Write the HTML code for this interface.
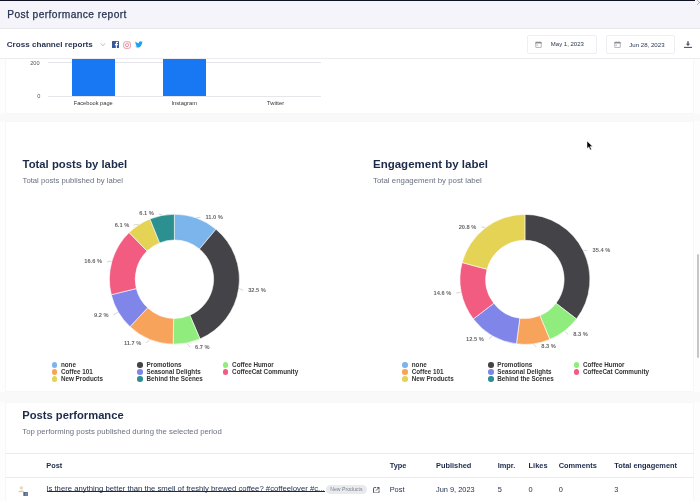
<!DOCTYPE html>
<html><head><meta charset="utf-8"><style>
html,body{margin:0;padding:0;}
.wrap{position:absolute;left:0;top:0;width:700px;height:501px;will-change:transform;}
body{width:700px;height:501px;overflow:hidden;position:relative;background:#fff;font-family:"Liberation Sans",sans-serif;}
.t{position:absolute;white-space:nowrap;}
.r{position:absolute;}
</style></head><body><div class="wrap">
<div class="r" style="left:0px;top:0px;width:700px;height:501px;background:#fdfdfd;"></div>
<div class="r" style="left:0px;top:114px;width:700px;height:7px;background:#f9f9fa;"></div>
<div class="r" style="left:0px;top:392px;width:700px;height:10px;background:#f9f9fa;"></div>
<div class="r" style="left:5px;top:40px;width:689px;height:74px;background:#fff;border:1px solid #f7f7f8;box-sizing:border-box;"></div>
<div class="r" style="left:5px;top:121px;width:689px;height:271px;background:#fff;border:1px solid #f7f7f8;box-sizing:border-box;"></div>
<div class="r" style="left:5px;top:402px;width:689px;height:118px;background:#fff;border:1px solid #f7f7f8;box-sizing:border-box;"></div>
<div class="r" style="left:48px;top:62px;width:273px;height:1px;background:#e6e6ea;"></div>
<div class="r" style="left:48px;top:96px;width:273px;height:1px;background:#e6e6ea;"></div>
<div class="r" style="left:72px;top:50px;width:43px;height:46px;background:#1877f2;"></div>
<div class="r" style="left:163px;top:50px;width:43px;height:46px;background:#1877f2;"></div>
<div class="t" style="left:30.20px;top:60.56px;font-size:5.6px;line-height:5.6px;color:#555;font-weight:normal;letter-spacing:0px;">200</div>
<div class="t" style="left:37.20px;top:94.16px;font-size:5.6px;line-height:5.6px;color:#555;font-weight:normal;letter-spacing:0px;">0</div>
<div class="t" style="left:73.70px;top:101.00px;font-size:5.67px;line-height:5.67px;color:#333;font-weight:normal;letter-spacing:0px;">Facebook page</div>
<div class="t" style="left:171.40px;top:100.92px;font-size:5.76px;line-height:5.76px;color:#333;font-weight:normal;letter-spacing:0px;">Instagram</div>
<div class="t" style="left:267.00px;top:100.89px;font-size:5.8px;line-height:5.8px;color:#333;font-weight:normal;letter-spacing:0px;">Twitter</div>
<div class="r" style="left:0px;top:0px;width:700px;height:29px;background:#f4f4fa;border-bottom:1px solid #e8e8ec;box-sizing:border-box;"></div>
<div class="r" style="left:0px;top:0px;width:695px;height:1.3px;background:#0f1220;"></div>
<div class="r" style="left:0px;top:29px;width:700px;height:30px;background:#fff;border-bottom:1px solid #ececf0;box-sizing:border-box;"></div>
<div class="t" style="left:7.30px;top:10.27px;font-size:10.2px;line-height:10.2px;color:#26314f;font-weight:normal;letter-spacing:0.42px;-webkit-text-stroke:0.25px #26314f;">Post performance report</div>
<div class="t" style="left:6.70px;top:40.83px;font-size:8.12px;line-height:8.12px;color:#2a3450;font-weight:bold;letter-spacing:0px;">Cross channel reports</div>
<svg class="r" style="left:99px;top:41px" width="8" height="7" viewBox="0 0 8 7"><path d="M1.7 2.3 L3.9 4.9 L6.1 2.3" fill="none" stroke="#a4a9b4" stroke-width="0.7"/></svg>
<svg class="r" style="left:112px;top:41.2px" width="7" height="7" viewBox="0 0 7 7"><rect width="7" height="7" rx="0.6" fill="#3b5998"/><path d="M4.9 7 V4.2 H5.9 L6 3.1 H4.9 V2.4 C4.9 2.1 5 1.9 5.4 1.9 H6 V0.9 C5.8 0.9 5.5 0.85 5.1 0.85 C4.3 0.85 3.8 1.3 3.8 2.2 V3.1 H2.9 V4.2 H3.8 V7 Z" fill="#fff"/></svg>
<svg class="r" style="left:123px;top:41px" width="8" height="8" viewBox="0 0 8 8"><rect x="0.7" y="0.8" width="6.7" height="6.5" rx="1.8" fill="none" stroke="#e0728c" stroke-width="0.75"/><circle cx="4" cy="4.1" r="1.55" fill="none" stroke="#e0728c" stroke-width="0.75"/><circle cx="5.9" cy="2.2" r="0.4" fill="#e0728c"/></svg>
<svg class="r" style="left:134.8px;top:41.3px" width="7.8" height="6.8" viewBox="0 0 24 20"><path fill="#1da1f2" d="M24 2.4c-.9.4-1.8.6-2.8.8 1-.6 1.8-1.6 2.2-2.7-1 .6-2 1-3.1 1.2C19.4.7 18.1.1 16.7.1c-2.7 0-4.9 2.2-4.9 4.9 0 .4 0 .8.1 1.1C7.8 5.9 4.2 4 1.7.9 1.3 1.6 1 2.5 1 3.4c0 1.7.9 3.2 2.2 4.1-.8 0-1.6-.2-2.2-.6v.1c0 2.4 1.7 4.4 3.9 4.8-.4.1-.8.2-1.3.2-.3 0-.6 0-.9-.1.6 2 2.4 3.4 4.6 3.4-1.7 1.3-3.8 2.1-6.1 2.1-.4 0-.8 0-1.2-.1 2.2 1.4 4.8 2.2 7.5 2.2 9.1 0 14-7.5 14-14v-.6c1-.7 1.8-1.6 2.5-2.5z"/></svg>
<div class="r" style="left:527px;top:35.1px;width:70px;height:19.1px;background:#fff;border:1px solid #efeff3;border-radius:2px;box-sizing:border-box;"></div>
<svg class="r" style="left:534.9px;top:41.3px" width="7" height="7" viewBox="0 0 7 7"><rect x="0.75" y="1.25" width="5.5" height="5.2" rx="0.3" fill="none" stroke="#85878f" stroke-width="0.6"/><path d="M0.5 1.8 H6.5" stroke="#6f727b" stroke-width="1.1"/><path d="M2.2 0.4 V1.4 M4.8 0.4 V1.4" stroke="#9a9ca3" stroke-width="0.6"/><rect x="1.6" y="3.6" width="1.4" height="1.2" fill="#b8bac0"/></svg>
<div class="t" style="left:550.80px;top:41.12px;font-size:6.0px;line-height:6.0px;color:#2a3450;font-weight:normal;letter-spacing:0px;">May 1, 2023</div>
<div class="r" style="left:605.7px;top:35.1px;width:69.5px;height:19.1px;background:#fff;border:1px solid #efeff3;border-radius:2px;box-sizing:border-box;"></div>
<svg class="r" style="left:613.6px;top:41.3px" width="7" height="7" viewBox="0 0 7 7"><rect x="0.75" y="1.25" width="5.5" height="5.2" rx="0.3" fill="none" stroke="#85878f" stroke-width="0.6"/><path d="M0.5 1.8 H6.5" stroke="#6f727b" stroke-width="1.1"/><path d="M2.2 0.4 V1.4 M4.8 0.4 V1.4" stroke="#9a9ca3" stroke-width="0.6"/><rect x="1.6" y="3.6" width="1.4" height="1.2" fill="#b8bac0"/></svg>
<div class="t" style="left:629.30px;top:41.74px;font-size:6.1px;line-height:6.1px;color:#2a3450;font-weight:normal;letter-spacing:0px;">Jun 28, 2023</div>
<svg class="r" style="left:683px;top:41px" width="10" height="8" viewBox="0 0 10 8"><path d="M4.3 0.2 H5.7 V2.8 H7.2 L5 5 L2.8 2.8 H4.3 Z" fill="#4d5363"/><path d="M1 6.4 H9" stroke="#4d5363" stroke-width="1.1"/></svg>
<svg class="r" style="left:695px;top:0px" width="5" height="6" viewBox="0 0 5 6"><path d="M2 0 L5 3 M2 5 L5 2" stroke="#888" stroke-width="0.6"/></svg>
<div class="t" style="left:22.60px;top:158.73px;font-size:11.3px;line-height:11.3px;color:#1c2a4a;font-weight:bold;letter-spacing:0px;">Total posts by label</div>
<div class="t" style="left:22.60px;top:177.28px;font-size:7.7px;line-height:7.7px;color:#6b7180;font-weight:normal;letter-spacing:0px;">Total posts published by label</div>
<div class="t" style="left:373.00px;top:158.57px;font-size:11.5px;line-height:11.5px;color:#1c2a4a;font-weight:bold;letter-spacing:0px;">Engagement by label</div>
<div class="t" style="left:373.00px;top:177.14px;font-size:7.87px;line-height:7.87px;color:#6b7180;font-weight:normal;letter-spacing:0px;">Total engagement by post label</div>
<div class="t" style="left:205.50px;top:214.97px;font-size:5.7px;line-height:5.7px;color:#666;font-weight:bold;letter-spacing:0px;">11.0 %</div>
<div class="t" style="left:248.20px;top:287.97px;font-size:5.7px;line-height:5.7px;color:#666;font-weight:bold;letter-spacing:0px;">32.5 %</div>
<div class="t" style="left:195.00px;top:344.57px;font-size:5.7px;line-height:5.7px;color:#666;font-weight:bold;letter-spacing:0px;">6.7 %</div>
<div class="t" style="left:124.00px;top:340.57px;font-size:5.7px;line-height:5.7px;color:#666;font-weight:bold;letter-spacing:0px;">11.7 %</div>
<div class="t" style="left:94.00px;top:312.57px;font-size:5.7px;line-height:5.7px;color:#666;font-weight:bold;letter-spacing:0px;">9.2 %</div>
<div class="t" style="left:84.30px;top:259.47px;font-size:5.7px;line-height:5.7px;color:#666;font-weight:bold;letter-spacing:0px;">16.6 %</div>
<div class="t" style="left:114.70px;top:222.57px;font-size:5.7px;line-height:5.7px;color:#666;font-weight:bold;letter-spacing:0px;">6.1 %</div>
<div class="t" style="left:139.30px;top:211.47px;font-size:5.7px;line-height:5.7px;color:#666;font-weight:bold;letter-spacing:0px;">6.1 %</div>
<div class="t" style="left:592.60px;top:248.37px;font-size:5.7px;line-height:5.7px;color:#666;font-weight:bold;letter-spacing:0px;">35.4 %</div>
<div class="t" style="left:573.20px;top:331.87px;font-size:5.7px;line-height:5.7px;color:#666;font-weight:bold;letter-spacing:0px;">8.3 %</div>
<div class="t" style="left:541.30px;top:344.27px;font-size:5.7px;line-height:5.7px;color:#666;font-weight:bold;letter-spacing:0px;">8.3 %</div>
<div class="t" style="left:466.00px;top:336.57px;font-size:5.7px;line-height:5.7px;color:#666;font-weight:bold;letter-spacing:0px;">12.5 %</div>
<div class="t" style="left:433.60px;top:290.67px;font-size:5.7px;line-height:5.7px;color:#666;font-weight:bold;letter-spacing:0px;">14.6 %</div>
<div class="t" style="left:458.70px;top:224.57px;font-size:5.7px;line-height:5.7px;color:#666;font-weight:bold;letter-spacing:0px;">20.8 %</div>
<svg class="r" style="left:0;top:0" width="700" height="501" viewBox="0 0 700 501">
<path d="M174.400 214.200 A65 65 0 0 1 215.968 229.229 L199.468 249.063 A39.2 39.2 0 0 0 174.400 240.000 Z" fill="#7cb5ec" stroke="#fff" stroke-width="0.6" stroke-linejoin="round"/>
<path d="M215.968 229.229 A65 65 0 0 1 199.996 338.948 L189.836 315.233 A39.2 39.2 0 0 0 199.468 249.063 Z" fill="#434348" stroke="#fff" stroke-width="0.6" stroke-linejoin="round"/>
<path d="M199.996 338.948 A65 65 0 0 1 173.147 344.188 L173.645 318.393 A39.2 39.2 0 0 0 189.836 315.233 Z" fill="#90ed7d" stroke="#fff" stroke-width="0.6" stroke-linejoin="round"/>
<path d="M173.147 344.188 A65 65 0 0 1 130.014 326.686 L147.632 307.838 A39.2 39.2 0 0 0 173.645 318.393 Z" fill="#f7a35c" stroke="#fff" stroke-width="0.6" stroke-linejoin="round"/>
<path d="M130.014 326.686 A65 65 0 0 1 111.277 294.709 L136.332 288.553 A39.2 39.2 0 0 0 147.632 307.838 Z" fill="#8085e9" stroke="#fff" stroke-width="0.6" stroke-linejoin="round"/>
<path d="M111.277 294.709 A65 65 0 0 1 129.107 232.578 L147.085 251.084 A39.2 39.2 0 0 0 136.332 288.553 Z" fill="#f15c80" stroke="#fff" stroke-width="0.6" stroke-linejoin="round"/>
<path d="M129.107 232.578 A65 65 0 0 1 149.960 218.970 L159.661 242.876 A39.2 39.2 0 0 0 147.085 251.084 Z" fill="#e4d354" stroke="#fff" stroke-width="0.6" stroke-linejoin="round"/>
<path d="M149.960 218.970 A65 65 0 0 1 174.400 214.200 L174.400 240.000 A39.2 39.2 0 0 0 159.661 242.876 Z" fill="#2b908f" stroke="#fff" stroke-width="0.6" stroke-linejoin="round"/>
<path d="M524.900 214.400 A65 65 0 0 1 576.468 318.969 L555.999 303.263 A39.2 39.2 0 0 0 524.900 240.200 Z" fill="#434348" stroke="#fff" stroke-width="0.6" stroke-linejoin="round"/>
<path d="M576.468 318.969 A65 65 0 0 1 549.774 339.452 L539.901 315.616 A39.2 39.2 0 0 0 555.999 303.263 Z" fill="#90ed7d" stroke="#fff" stroke-width="0.6" stroke-linejoin="round"/>
<path d="M549.774 339.452 A65 65 0 0 1 516.416 343.844 L519.783 318.265 A39.2 39.2 0 0 0 539.901 315.616 Z" fill="#f7a35c" stroke="#fff" stroke-width="0.6" stroke-linejoin="round"/>
<path d="M516.416 343.844 A65 65 0 0 1 473.332 318.969 L493.801 303.263 A39.2 39.2 0 0 0 519.783 318.265 Z" fill="#8085e9" stroke="#fff" stroke-width="0.6" stroke-linejoin="round"/>
<path d="M473.332 318.969 A65 65 0 0 1 462.115 262.577 L487.036 269.254 A39.2 39.2 0 0 0 493.801 303.263 Z" fill="#f15c80" stroke="#fff" stroke-width="0.6" stroke-linejoin="round"/>
<path d="M462.115 262.577 A65 65 0 0 1 524.900 214.400 L524.900 240.200 A39.2 39.2 0 0 0 487.036 269.254 Z" fill="#e4d354" stroke="#fff" stroke-width="0.6" stroke-linejoin="round"/>
<path d="M200.50 217.40 L196.67 217.60" stroke="#aaa" stroke-width="0.5" fill="none"/>
<path d="M243.20 290.40 L239.22 288.64" stroke="#aaa" stroke-width="0.5" fill="none"/>
<path d="M190.00 347.00 L186.95 343.49" stroke="#aaa" stroke-width="0.5" fill="none"/>
<path d="M146.00 343.00 L149.77 339.89" stroke="#aaa" stroke-width="0.5" fill="none"/>
<path d="M113.40 315.00 L117.89 312.31" stroke="#aaa" stroke-width="0.5" fill="none"/>
<path d="M107.00 261.90 L111.44 261.13" stroke="#aaa" stroke-width="0.5" fill="none"/>
<path d="M133.70 225.00 L138.60 224.35" stroke="#aaa" stroke-width="0.5" fill="none"/>
<path d="M158.60 213.90 L161.85 214.91" stroke="#aaa" stroke-width="0.5" fill="none"/>
<path d="M587.60 250.80 L583.65 250.43" stroke="#aaa" stroke-width="0.5" fill="none"/>
<path d="M568.20 334.30 L564.77 331.36" stroke="#aaa" stroke-width="0.5" fill="none"/>
<path d="M536.30 346.70 L533.45 344.34" stroke="#aaa" stroke-width="0.5" fill="none"/>
<path d="M488.70 339.00 L492.15 336.12" stroke="#aaa" stroke-width="0.5" fill="none"/>
<path d="M456.20 293.10 L460.66 292.18" stroke="#aaa" stroke-width="0.5" fill="none"/>
<path d="M481.30 227.00 L485.03 227.44" stroke="#aaa" stroke-width="0.5" fill="none"/>
</svg>
<div class="r" style="left:51.65px;top:362.10px;width:5.5px;height:5.5px;border-radius:50%;background:#7cb5ec"></div>
<div class="t" style="left:60.90px;top:362.17px;font-size:6.3px;line-height:6.3px;color:#333;font-weight:bold;letter-spacing:0px;">none</div>
<div class="r" style="left:51.65px;top:369.05px;width:5.5px;height:5.5px;border-radius:50%;background:#f7a35c"></div>
<div class="t" style="left:60.90px;top:369.12px;font-size:6.3px;line-height:6.3px;color:#333;font-weight:bold;letter-spacing:0px;">Coffee 101</div>
<div class="r" style="left:51.65px;top:376.00px;width:5.5px;height:5.5px;border-radius:50%;background:#e4d354"></div>
<div class="t" style="left:60.90px;top:376.07px;font-size:6.3px;line-height:6.3px;color:#333;font-weight:bold;letter-spacing:0px;">New Products</div>
<div class="r" style="left:137.25px;top:362.10px;width:5.5px;height:5.5px;border-radius:50%;background:#434348"></div>
<div class="t" style="left:146.50px;top:362.17px;font-size:6.3px;line-height:6.3px;color:#333;font-weight:bold;letter-spacing:0px;">Promotions</div>
<div class="r" style="left:137.25px;top:369.05px;width:5.5px;height:5.5px;border-radius:50%;background:#8085e9"></div>
<div class="t" style="left:146.50px;top:369.12px;font-size:6.3px;line-height:6.3px;color:#333;font-weight:bold;letter-spacing:0px;">Seasonal Delights</div>
<div class="r" style="left:137.25px;top:376.00px;width:5.5px;height:5.5px;border-radius:50%;background:#2b908f"></div>
<div class="t" style="left:146.50px;top:376.07px;font-size:6.3px;line-height:6.3px;color:#333;font-weight:bold;letter-spacing:0px;">Behind the Scenes</div>
<div class="r" style="left:222.85px;top:362.10px;width:5.5px;height:5.5px;border-radius:50%;background:#90ed7d"></div>
<div class="t" style="left:232.10px;top:362.17px;font-size:6.3px;line-height:6.3px;color:#333;font-weight:bold;letter-spacing:0px;">Coffee Humor</div>
<div class="r" style="left:222.85px;top:369.05px;width:5.5px;height:5.5px;border-radius:50%;background:#f15c80"></div>
<div class="t" style="left:232.10px;top:369.12px;font-size:6.3px;line-height:6.3px;color:#333;font-weight:bold;letter-spacing:0px;">CoffeeCat Community</div>
<div class="r" style="left:402.45px;top:362.10px;width:5.5px;height:5.5px;border-radius:50%;background:#7cb5ec"></div>
<div class="t" style="left:411.70px;top:362.17px;font-size:6.3px;line-height:6.3px;color:#333;font-weight:bold;letter-spacing:0px;">none</div>
<div class="r" style="left:402.45px;top:369.05px;width:5.5px;height:5.5px;border-radius:50%;background:#f7a35c"></div>
<div class="t" style="left:411.70px;top:369.12px;font-size:6.3px;line-height:6.3px;color:#333;font-weight:bold;letter-spacing:0px;">Coffee 101</div>
<div class="r" style="left:402.45px;top:376.00px;width:5.5px;height:5.5px;border-radius:50%;background:#e4d354"></div>
<div class="t" style="left:411.70px;top:376.07px;font-size:6.3px;line-height:6.3px;color:#333;font-weight:bold;letter-spacing:0px;">New Products</div>
<div class="r" style="left:488.05px;top:362.10px;width:5.5px;height:5.5px;border-radius:50%;background:#434348"></div>
<div class="t" style="left:497.30px;top:362.17px;font-size:6.3px;line-height:6.3px;color:#333;font-weight:bold;letter-spacing:0px;">Promotions</div>
<div class="r" style="left:488.05px;top:369.05px;width:5.5px;height:5.5px;border-radius:50%;background:#8085e9"></div>
<div class="t" style="left:497.30px;top:369.12px;font-size:6.3px;line-height:6.3px;color:#333;font-weight:bold;letter-spacing:0px;">Seasonal Delights</div>
<div class="r" style="left:488.05px;top:376.00px;width:5.5px;height:5.5px;border-radius:50%;background:#2b908f"></div>
<div class="t" style="left:497.30px;top:376.07px;font-size:6.3px;line-height:6.3px;color:#333;font-weight:bold;letter-spacing:0px;">Behind the Scenes</div>
<div class="r" style="left:573.65px;top:362.10px;width:5.5px;height:5.5px;border-radius:50%;background:#90ed7d"></div>
<div class="t" style="left:582.90px;top:362.17px;font-size:6.3px;line-height:6.3px;color:#333;font-weight:bold;letter-spacing:0px;">Coffee Humor</div>
<div class="r" style="left:573.65px;top:369.05px;width:5.5px;height:5.5px;border-radius:50%;background:#f15c80"></div>
<div class="t" style="left:582.90px;top:369.12px;font-size:6.3px;line-height:6.3px;color:#333;font-weight:bold;letter-spacing:0px;">CoffeeCat Community</div>
<div class="t" style="left:22.30px;top:410.22px;font-size:11.2px;line-height:11.2px;color:#1c2a4a;font-weight:bold;letter-spacing:0px;">Posts performance</div>
<div class="t" style="left:22.30px;top:427.61px;font-size:7.78px;line-height:7.78px;color:#6b7180;font-weight:normal;letter-spacing:0px;">Top performing posts published during the selected period</div>
<div class="r" style="left:5px;top:453px;width:689px;height:1px;background:#ececf0;"></div>
<div class="r" style="left:5px;top:477px;width:689px;height:1px;background:#ececf0;"></div>
<div class="t" style="left:46.30px;top:461.54px;font-size:7.4px;line-height:7.4px;color:#1c2a4a;font-weight:bold;letter-spacing:0px;">Post</div>
<div class="t" style="left:389.70px;top:461.54px;font-size:7.4px;line-height:7.4px;color:#1c2a4a;font-weight:bold;letter-spacing:0px;">Type</div>
<div class="t" style="left:436.00px;top:461.54px;font-size:7.4px;line-height:7.4px;color:#1c2a4a;font-weight:bold;letter-spacing:0px;">Published</div>
<div class="t" style="left:497.70px;top:461.54px;font-size:7.4px;line-height:7.4px;color:#1c2a4a;font-weight:bold;letter-spacing:0px;">Impr.</div>
<div class="t" style="left:528.60px;top:461.54px;font-size:7.4px;line-height:7.4px;color:#1c2a4a;font-weight:bold;letter-spacing:0px;">Likes</div>
<div class="t" style="left:558.70px;top:461.54px;font-size:7.4px;line-height:7.4px;color:#1c2a4a;font-weight:bold;letter-spacing:0px;">Comments</div>
<div class="t" style="left:614.30px;top:461.54px;font-size:7.4px;line-height:7.4px;color:#1c2a4a;font-weight:bold;letter-spacing:0px;">Total engagement</div>
<div class="t" style="left:46.30px;top:485.07px;font-size:7.72px;line-height:7.72px;color:#1c2a4a;font-weight:normal;letter-spacing:0px;">Is there anything better than the smell of freshly brewed coffee? #coffeelover #c...</div>
<div class="r" style="left:46.5px;top:491.3px;width:278.1px;height:0.6999999999999886px;background:#1c2a4a;"></div>
<div class="r" style="left:326.3px;top:485px;width:40.4px;height:9px;border-radius:4.5px;background:#e9eaee;"></div>
<div class="t" style="left:330.20px;top:487.18px;font-size:5.1px;line-height:5.1px;color:#7a7f8c;font-weight:normal;letter-spacing:0.05px;">New Products</div>
<svg class="r" style="left:372.6px;top:486.6px" width="7.2" height="6.6" viewBox="0 0 7.2 6.6"><path d="M3.2 0.6 H1.3 Q0.55 0.6 0.55 1.35 V5.3 Q0.55 6.05 1.3 6.05 H5.3 Q6.05 6.05 6.05 5.3 V3.4" fill="none" stroke="#2a2f3d" stroke-width="0.85"/><path d="M2.9 3.7 L5.9 0.7 M4.1 0.6 H6.1 V2.6" fill="none" stroke="#2a2f3d" stroke-width="0.8"/></svg>
<div class="t" style="left:389.70px;top:485.54px;font-size:7.4px;line-height:7.4px;color:#1c2a4a;font-weight:normal;letter-spacing:0px;">Post</div>
<div class="t" style="left:436.00px;top:485.54px;font-size:7.4px;line-height:7.4px;color:#1c2a4a;font-weight:normal;letter-spacing:0px;">Jun 9, 2023</div>
<div class="t" style="left:497.70px;top:485.54px;font-size:7.4px;line-height:7.4px;color:#1c2a4a;font-weight:normal;letter-spacing:0px;">5</div>
<div class="t" style="left:528.60px;top:485.54px;font-size:7.4px;line-height:7.4px;color:#1c2a4a;font-weight:normal;letter-spacing:0px;">0</div>
<div class="t" style="left:558.70px;top:485.54px;font-size:7.4px;line-height:7.4px;color:#1c2a4a;font-weight:normal;letter-spacing:0px;">0</div>
<div class="t" style="left:614.30px;top:485.54px;font-size:7.4px;line-height:7.4px;color:#1c2a4a;font-weight:normal;letter-spacing:0px;">3</div>
<svg class="r" style="left:17px;top:485px" width="12" height="12" viewBox="0 0 12 12"><circle cx="4.3" cy="2.9" r="1.7" fill="#ead6bf"/><path d="M1 7.3 C1.3 5 7.3 5 7.6 7.3 Z" fill="#e2cdb6"/><rect x="6.3" y="7" width="4.6" height="4" rx="0.5" fill="#56698f"/><path d="M8.9 11 V9.3 H9.6 V8.7 H8.9 V8.3 C8.9 8.1 9 8 9.2 8 H9.6" fill="none" stroke="#c9d1e3" stroke-width="0.4"/></svg>
<div class="r" style="left:696.5px;top:254px;width:2.5px;height:104px;background:#c6c6c6;border-radius:1.5px;"></div>
<svg class="r" style="left:586px;top:140px" width="8" height="11" viewBox="0 0 8 11"><path d="M1 1 L1 8.5 L2.8 6.9 L4.3 10 L5.5 9.4 L4.1 6.4 L6.6 6.4 Z" fill="#000" stroke="#fff" stroke-width="0.5"/></svg>
</div></body></html>
